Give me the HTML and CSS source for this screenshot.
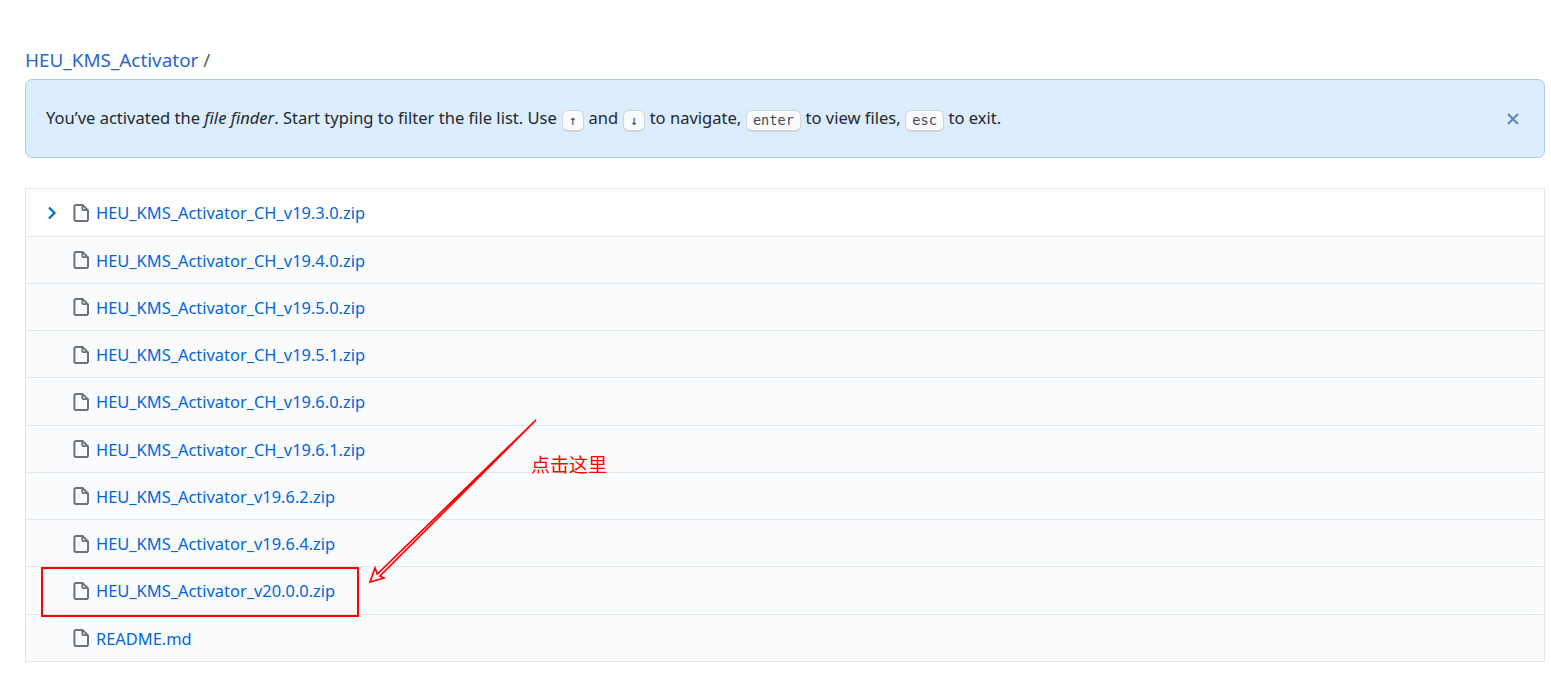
FILE: index.html
```html
<!DOCTYPE html>
<html lang="en">
<head>
<meta charset="utf-8">
<title>HEU_KMS_Activator</title>
<link rel="stylesheet" href="styles.css">
</head>
<body>
<main class="page">
  <svg class="defs" width="0" height="0" aria-hidden="true">
    <symbol id="file" viewBox="0 0 16 18">
      <path d="M2.9 1h6.6L15 6.4v9.2a1.5 1.5 0 0 1-1.5 1.5H2.9a1.5 1.5 0 0 1-1.5-1.5V2.5A1.5 1.5 0 0 1 2.9 1Z" fill="none" stroke="#6a737d" stroke-width="2"/>
      <path d="M9.3 1.2v3.7a1.2 1.2 0 0 0 1.2 1.2h4.3" fill="none" stroke="#6a737d" stroke-width="1.8"/>
    </symbol>
  </svg>
  <nav class="crumb"><a href="#">HEU_KMS_Activator</a> <span class="sep">/</span></nav>
  <div class="flash">
    <p class="flash-text">You’ve activated the <em>file finder</em>. Start typing to filter the file list. Use <kbd>↑</kbd> and <kbd>↓</kbd> to navigate, <kbd>enter</kbd> to view files, <kbd>esc</kbd> to exit.</p>
    <svg class="close" width="14" height="14" viewBox="0 0 14 14" aria-label="Close"><path d="M2 2l10 10M12 2L2 12" stroke="#5b89b8" stroke-width="2" fill="none"/></svg>
  </div>
  <ul class="files">
    <li class="row first"><svg class="chev" width="10" height="14" viewBox="0 0 10 14"><path d="M2 1.5l5.5 5.5L2 12.5" fill="none" stroke="#0366d6" stroke-width="2.2"/></svg><svg class="ficon" width="16" height="18"><use href="#file"/></svg><a href="#">HEU_KMS_Activator_CH_v19.3.0.zip</a></li>
    <li class="row"><svg class="ficon" width="16" height="18"><use href="#file"/></svg><a href="#">HEU_KMS_Activator_CH_v19.4.0.zip</a></li>
    <li class="row"><svg class="ficon" width="16" height="18"><use href="#file"/></svg><a href="#">HEU_KMS_Activator_CH_v19.5.0.zip</a></li>
    <li class="row"><svg class="ficon" width="16" height="18"><use href="#file"/></svg><a href="#">HEU_KMS_Activator_CH_v19.5.1.zip</a></li>
    <li class="row"><svg class="ficon" width="16" height="18"><use href="#file"/></svg><a href="#">HEU_KMS_Activator_CH_v19.6.0.zip</a></li>
    <li class="row"><svg class="ficon" width="16" height="18"><use href="#file"/></svg><a href="#">HEU_KMS_Activator_CH_v19.6.1.zip</a></li>
    <li class="row"><svg class="ficon" width="16" height="18"><use href="#file"/></svg><a href="#">HEU_KMS_Activator_v19.6.2.zip</a></li>
    <li class="row"><svg class="ficon" width="16" height="18"><use href="#file"/></svg><a href="#">HEU_KMS_Activator_v19.6.4.zip</a></li>
    <li class="row"><svg class="ficon" width="16" height="18"><use href="#file"/></svg><a href="#">HEU_KMS_Activator_v20.0.0.zip</a></li>
    <li class="row"><svg class="ficon" width="16" height="18"><use href="#file"/></svg><a href="#">README.md</a></li>
  </ul>
  <svg class="arrow" width="180" height="175" viewBox="0 0 180 175" aria-hidden="true">
    <path d="M172 2L13.3 156L11 150L6 164L20 160L16 158Z" fill="#f9fbfd" stroke="#f00" stroke-width="1.7"/>
  </svg>
  <span class="note">点击这里</span>
  <div class="mark"></div>
</main>
</body>
</html>
```
FILE: styles.css
```css
* { box-sizing: border-box; }
html, body { margin: 0; padding: 0; background: #fff; overflow: hidden; }
body { font-family: "Noto Sans", "Open Sans", "Liberation Sans", sans-serif; color: #24292e; }
.page { position: relative; width: 1551px; height: 676px; padding: 46px 6px 0 25px; }
.defs { position: absolute; }
a { color: #0366d6; text-decoration: none; }
.crumb { height: 33px; font-size: 18.9px; line-height: 28px; color: #586069; }
.crumb a { color: #2b66c9; }
.flash { height: 79px; display: flex; align-items: center; justify-content: space-between; padding: 0 24px 0 20px; background: #dbedff; border: 1px solid #b0cde8; border-radius: 7px; }
.flash-text { margin: 0; font-size: 16.55px; color: #24292e; white-space: nowrap; }
kbd { display: inline-block; margin: 0 0.4px; font-family: "DejaVu Sans Mono", "Liberation Mono", monospace; font-size: 13.6px; line-height: 17px; padding: 1px 6px; background: #fafbfc; border: 1px solid #d1d5da; border-bottom-width: 2px; border-radius: 6px; color: #444d56; vertical-align: -1px; }
.files { list-style: none; margin: 30px 0 0; padding: 0; border: 1px solid #e3e6ea; }
.row { position: relative; height: 47.25px; display: flex; align-items: center; padding: 1px 0 0 47px; background: #f9fbfd; border-top: 1px solid #e3e6ea; font-size: 16.43px; }
.row.first { background: #fff; border-top: 0; height: 46.6px; }
.ficon { flex: none; margin-right: 7px; }
.chev { position: absolute; left: 21px; top: 17px; }
.arrow { position: absolute; left: 364px; top: 418px; }
.note { position: absolute; left: 531px; top: 452px; font-family: "Noto Sans CJK SC", sans-serif; font-size: 19px; line-height: 24px; color: #f00; }
.mark { position: absolute; left: 41px; top: 567px; width: 318px; height: 50px; border: 2px solid #f00; }
```
